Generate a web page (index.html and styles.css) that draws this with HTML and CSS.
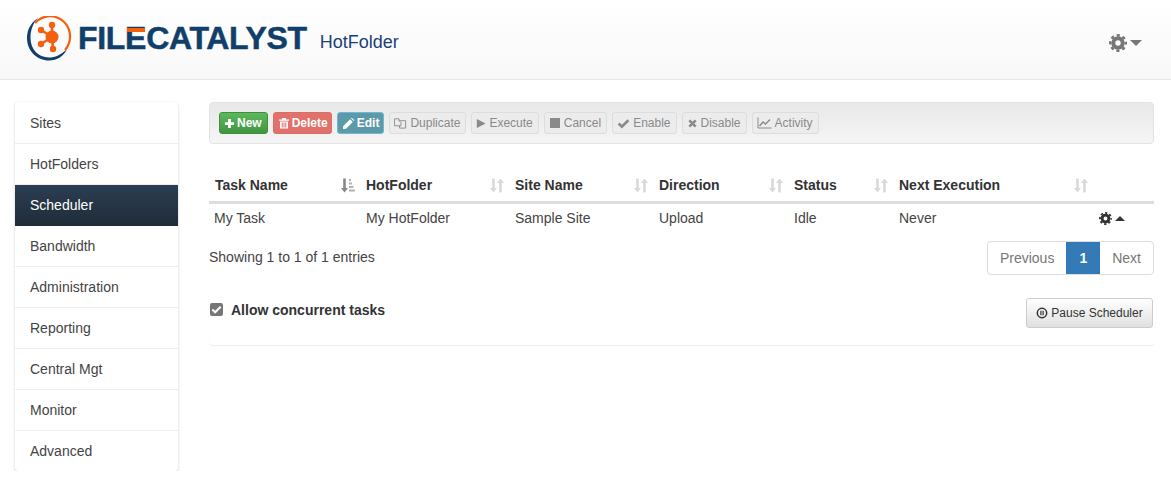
FILE: index.html

```html
<!DOCTYPE html>
<html lang="en">
<head>
  <meta charset="UTF-8">
  <title>FileCatalyst HotFolder</title>
  <link rel="stylesheet" href="styles.css">
</head>
<body>

<svg class="icon-defs" width="0" height="0">
  <defs>
    <symbol id="i-gear" viewBox="0 0 16 16">
      <circle cx="8" cy="8" r="4.2" fill="none" stroke="currentColor" stroke-width="3.6"/>
      <circle cx="8" cy="8" r="6.9" fill="none" stroke="currentColor" stroke-width="2.2" stroke-dasharray="2.8 2.62" stroke-dashoffset="1.4"/>
    </symbol>
    <symbol id="i-sort" viewBox="0 0 14 15">
      <path d="M3.500 14.500 0 10H2.200V.5H4.800V10H7Z M10.500 .5 14 5H11.800V14.500H9.200V5H7Z" fill="currentColor"/>
    </symbol>
    <symbol id="i-sort-asc" viewBox="0 0 14 15">
      <path d="M3.500 14.500 0 10H2.200V.5H4.800V10H7Z" fill="currentColor"/>
      <path d="M8 1H10V3H8Z M8 4.500H11V6.500H8Z M8 8H12.500V10H8Z M8 11.500H14V13.500H8Z" fill="currentColor" opacity=".65"/>
    </symbol>
    <symbol id="i-plus" viewBox="0 0 12 12">
      <path d="M4.500 1H7.500V4.500H11V7.500H7.500V11H4.500V7.500H1V4.500H4.500Z" fill="currentColor"/>
    </symbol>
    <symbol id="i-trash" viewBox="0 0 12 12">
      <path d="M1 2.500H4V1H8V2.500H11V3.700H1ZM2 4.500H10V11.500H2ZM3.700 5.500V10.500H4.700V5.500ZM5.500 5.500V10.500H6.500V5.500ZM7.300 5.500V10.500H8.300V5.500Z" fill="currentColor" fill-rule="evenodd"/>
    </symbol>
    <symbol id="i-pencil" viewBox="0 0 12 12">
      <path d="M1 8.500 7.500 2 10 4.500 3.500 11H1ZM8.300 1.200 9 .6 11.400 3 10.800 3.700Z" fill="currentColor"/>
    </symbol>
    <symbol id="i-copy" viewBox="0 0 14 12">
      <path d="M.5 1.500H5.500V3.500L7.500 5.500V9H.5Z M5.500 3.500H12.500V11.500H6V9" fill="none" stroke="currentColor"/>
    </symbol>
    <symbol id="i-play" viewBox="0 0 12 12">
      <path d="M1 .5 11.500 6 1 11.500Z" fill="currentColor"/>
    </symbol>
    <symbol id="i-stop" viewBox="0 0 12 12">
      <path d="M1 1H11V11H1Z" fill="currentColor"/>
    </symbol>
    <symbol id="i-check" viewBox="0 0 12 12">
      <path d="M1.500 6 4.500 9 10.500 3" fill="none" stroke="currentColor" stroke-width="2.400"/>
    </symbol>
    <symbol id="i-cross" viewBox="0 0 12 12">
      <path d="M2.500 2.500 9.500 9.500M9.500 2.500 2.500 9.500" fill="none" stroke="currentColor" stroke-width="2.800"/>
    </symbol>
    <symbol id="i-chart" viewBox="0 0 14 12">
      <path d="M.5 .5V11H14" fill="none" stroke="currentColor"/>
      <path d="M2 9 5.500 5 8 7 12.500 2.500" fill="none" stroke="currentColor" stroke-width="1.400"/>
    </symbol>
    <symbol id="i-pause" viewBox="0 0 12 12">
      <circle cx="6" cy="6" r="4.700" fill="none" stroke="currentColor" stroke-width="1.500"/>
      <path d="M4.300 3.800H5.500V8.200H4.300ZM6.500 3.800H7.700V8.200H6.500Z" fill="currentColor"/>
    </symbol>
  </defs>
</svg>

<header class="topbar">
  <div class="brand">
    <svg class="logo-mark" viewBox="0 0 46 46" width="46" height="46">
      <path d="M11 2C2 8 0 16 0 22C0 35 10 44.500 22 44.500C30 44.500 37 40 40 33C34 39 28 41.500 22 41.500C11 41.500 3.500 33 3.500 22C3.500 14 6 7 11 2Z" fill="#103f6b"/>
      <path d="M8 7A20 20 0 0 1 43 20 20 20 0 0 1 38 34" fill="none" stroke="#f4600f" stroke-width="2.200"/>
      <path d="M25 9 25 21M14 14 25 21M14 28 25 21M26 33 25 21" stroke="#f4600f" stroke-width="2.600"/>
      <circle cx="25" cy="21" r="6.500" fill="#f4600f"/>
      <circle cx="25" cy="9" r="3.200" fill="#f4600f"/>
      <circle cx="14" cy="14" r="3.200" fill="#f4600f"/>
      <circle cx="14" cy="28" r="3.200" fill="#f4600f"/>
      <circle cx="26" cy="33" r="3.200" fill="#f4600f"/>
    </svg>
    <span class="logo-text">FIL<span class="logo-e">E</span>CATALYST</span>
    <span class="app-name">HotFolder</span>
  </div>
  <div class="top-menu">
    <svg class="top-gear" width="18" height="18"><use href="#i-gear"/></svg>
    <span class="caret-down"></span>
  </div>
</header>

<div class="page">
  <nav class="side-nav">
    <a href="#">Sites</a>
    <a href="#">HotFolders</a>
    <a href="#" class="active">Scheduler</a>
    <a href="#">Bandwidth</a>
    <a href="#">Administration</a>
    <a href="#">Reporting</a>
    <a href="#">Central Mgt</a>
    <a href="#">Monitor</a>
    <a href="#">Advanced</a>
  </nav>

  <main class="content">
    <div class="toolbar">
      <button class="btn btn-new"><svg width="11" height="11"><use href="#i-plus"/></svg>New</button>
      <button class="btn btn-delete"><svg width="12" height="12"><use href="#i-trash"/></svg>Delete</button>
      <button class="btn btn-edit"><svg width="13" height="13"><use href="#i-pencil"/></svg>Edit</button>
      <button class="btn btn-off"><svg width="13" height="12"><use href="#i-copy"/></svg>Duplicate</button>
      <button class="btn btn-off"><svg width="10" height="11"><use href="#i-play"/></svg>Execute</button>
      <button class="btn btn-off"><svg width="12" height="12"><use href="#i-stop"/></svg>Cancel</button>
      <button class="btn btn-off"><svg width="13" height="13"><use href="#i-check"/></svg>Enable</button>
      <button class="btn btn-off"><svg width="11" height="11"><use href="#i-cross"/></svg>Disable</button>
      <button class="btn btn-off"><svg width="15" height="12"><use href="#i-chart"/></svg>Activity</button>
    </div>

    <table class="tasks">
      <colgroup>
        <col class="col-name">
        <col class="col-folder">
        <col class="col-site">
        <col class="col-dir">
        <col class="col-status">
        <col class="col-next">
        <col class="col-actions">
      </colgroup>
      <thead>
        <tr>
          <th class="th-first"><div class="th-in">Task Name<svg class="sort-on" width="14" height="15"><use href="#i-sort-asc"/></svg></div></th>
          <th><div class="th-in">HotFolder<svg class="sort" width="14" height="15"><use href="#i-sort"/></svg></div></th>
          <th><div class="th-in">Site Name<svg class="sort" width="14" height="15"><use href="#i-sort"/></svg></div></th>
          <th><div class="th-in">Direction<svg class="sort" width="14" height="15"><use href="#i-sort"/></svg></div></th>
          <th><div class="th-in">Status<svg class="sort" width="14" height="15"><use href="#i-sort"/></svg></div></th>
          <th><div class="th-in">Next Execution<svg class="sort" width="14" height="15"><use href="#i-sort"/></svg></div></th>
          <th></th>
        </tr>
      </thead>
      <tbody>
        <tr>
          <td>My Task</td>
          <td>My HotFolder</td>
          <td>Sample Site</td>
          <td>Upload</td>
          <td>Idle</td>
          <td>Never</td>
          <td><div class="row-menu"><svg width="13" height="13"><use href="#i-gear"/></svg><span class="caret-up"></span></div></td>
        </tr>
      </tbody>
    </table>

    <div class="table-foot">
      <div class="entries">Showing 1 to 1 of 1 entries</div>
      <div class="pager">
        <a href="#">Previous</a>
        <a href="#" class="current">1</a>
        <a href="#">Next</a>
      </div>
    </div>

    <div class="options">
      <label class="concurrent"><span class="check"><svg width="11" height="11"><use href="#i-check"/></svg></span>Allow concurrent tasks</label>
      <button class="btn-pause"><svg width="12" height="12"><use href="#i-pause"/></svg>Pause Scheduler</button>
    </div>
  </main>
</div>

</body>
</html>
```

FILE: styles.css

```css
* {
  box-sizing: border-box;
}

body {
  margin: 0;
  font-family: "Liberation Sans", Arial, sans-serif;
  font-size: 14px;
  color: #333;
  background: #fff;
}

.icon-defs {
  position: absolute;
}

a {
  text-decoration: none;
}

/* Top bar */
.topbar {
  height: 80px;
  padding: 0 28px 0 27px;
  display: flex;
  justify-content: space-between;
  align-items: center;
  background: linear-gradient(to bottom, #fff, #f8f8f8);
  border-bottom: 1px solid #e7e7e7;
}

.brand {
  display: flex;
  align-items: center;
}

.logo-mark {
  margin-top: -1px;
  margin-right: 5px;
}

.logo-text {
  font-size: 32px;
  font-weight: bold;
  letter-spacing: -0.3px;
  color: #103f6b;
  -webkit-text-stroke: 0.5px #103f6b;
  line-height: 40px;
  margin-top: -3px;
}

.logo-e {
  position: relative;
}

.logo-e::after {
  content: "";
  position: absolute;
  left: 2px;
  right: 1px;
  top: 8px;
  height: 4px;
  background: #f4600f;
}

.app-name {
  font-size: 18px;
  color: #1a3f78;
  margin-left: 13px;
  margin-top: 6px;
}

.top-menu {
  display: flex;
  align-items: center;
  gap: 3px;
  color: #777;
  margin-top: 6px;
  margin-right: 1px;
}

.top-gear {
  display: block;
}

.caret-down {
  border-left: 6px solid transparent;
  border-right: 6px solid transparent;
  border-top: 6px solid #777;
}

/* Layout */
.page {
  display: flex;
  align-items: flex-start;
  padding: 22px 17px 0 15px;
  gap: 31px;
}

.side-nav {
  width: 163px;
  flex: none;
  padding-top: 1px;
  background: #fff;
  border-radius: 4px;
  box-shadow: 0 1px 3px rgba(0, 0, 0, 0.18);
  overflow: hidden;
}

.side-nav a {
  display: block;
  height: 41px;
  line-height: 40px;
  padding-left: 15px;
  color: #444;
  border-bottom: 1px solid #eee;
}

.side-nav a:last-child {
  height: 40px;
  border-bottom: 0;
}

.side-nav a.active {
  color: #fff;
  background: linear-gradient(to bottom, #2c3e52, #1f2c39);
  border-bottom-color: #1f2c39;
}

.content {
  flex: 1;
  min-width: 0;
}

/* Toolbar */
.toolbar {
  height: 42px;
  padding: 9px 9px;
  display: flex;
  gap: 5px;
  background: linear-gradient(to bottom, #e8e8e8, #f5f5f5);
  border: 1px solid #e3e3e3;
  border-radius: 4px;
}

.btn {
  height: 22px;
  padding: 0 5px 0 4px;
  display: flex;
  align-items: center;
  gap: 3px;
  font-family: inherit;
  font-size: 12px;
  border: 1px solid transparent;
  border-radius: 3px;
  white-space: nowrap;
}

.btn-new {
  gap: 2px;
  font-weight: bold;
  color: #fff;
  background: linear-gradient(to bottom, #5cb85c, #419641);
  border-color: #3e8f3e;
}

.btn-delete {
  padding-right: 3px;
  gap: 2px;
  font-weight: bold;
  color: #fff;
  background: #e0716c;
  border-color: #dd6b66;
}

.btn-edit {
  padding-right: 4px;
  gap: 2px;
  font-weight: bold;
  color: #fff;
  background: #5c9aa9;
  border-color: #6fb8cf;
}

.btn-off {
  color: #8a8a8a;
  background: #ececec;
  border-color: #ddd;
}

/* Table */
.tasks {
  width: 100%;
  margin-top: 24px;
  border-collapse: collapse;
  table-layout: fixed;
}

.col-name { width: 152px; }
.col-folder { width: 149px; }
.col-site { width: 144px; }
.col-dir { width: 135px; }
.col-status { width: 105px; }
.col-next { width: 200px; }

.tasks th {
  height: 34px;
  padding: 2px 6px 0 5px;
  text-align: left;
  font-weight: bold;
  border-bottom: 3px solid #ddd;
}

.tasks .th-first {
  padding-left: 6px;
}

.th-in {
  display: flex;
  justify-content: space-between;
  align-items: center;
}

.sort {
  color: #d9d9d9;
}

.sort-on {
  color: #888;
}

.tasks td {
  height: 31px;
  padding: 0 5px;
  color: #444;
}

.row-menu {
  display: flex;
  align-items: center;
  gap: 3px;
  color: #333;
}

.row-menu svg {
  display: block;
}

.caret-up {
  border-left: 5px solid transparent;
  border-right: 5px solid transparent;
  border-bottom: 5px solid #333;
}

/* Footer of table */
.table-foot {
  display: flex;
  justify-content: space-between;
  align-items: flex-start;
  margin-top: 8px;
}

.entries {
  margin-top: 8px;
  color: #444;
}

.pager {
  display: flex;
  height: 34px;
  border: 1px solid #ddd;
  border-radius: 4px;
  overflow: hidden;
}

.pager a {
  padding: 0 12px;
  line-height: 32px;
  color: #777;
}

.pager a.current {
  padding: 0 13px;
  color: #fff;
  font-weight: bold;
  background: #337ab7;
}

/* Options panel */
.options {
  height: 59px;
  margin-top: 11px;
  padding: 12px 1px 0 1px;
  display: flex;
  justify-content: space-between;
  align-items: flex-start;
  border-radius: 4px;
  box-shadow: 0 1px 1px rgba(0, 0, 0, 0.07);
}

.concurrent {
  display: flex;
  align-items: center;
  gap: 8px;
  font-weight: bold;
  margin-top: 4px;
}

.check {
  width: 13px;
  height: 13px;
  margin-top: -2px;
  display: flex;
  align-items: center;
  justify-content: center;
  color: #fff;
  background: #777;
  border-radius: 2px;
}

.btn-pause {
  width: 127px;
  height: 30px;
  padding: 0;
  display: flex;
  align-items: center;
  justify-content: center;
  gap: 3px;
  font-family: inherit;
  font-size: 12px;
  color: #333;
  background: linear-gradient(to bottom, #fff, #e0e0e0);
  border: 1px solid #ccc;
  border-radius: 3px;
}
```
